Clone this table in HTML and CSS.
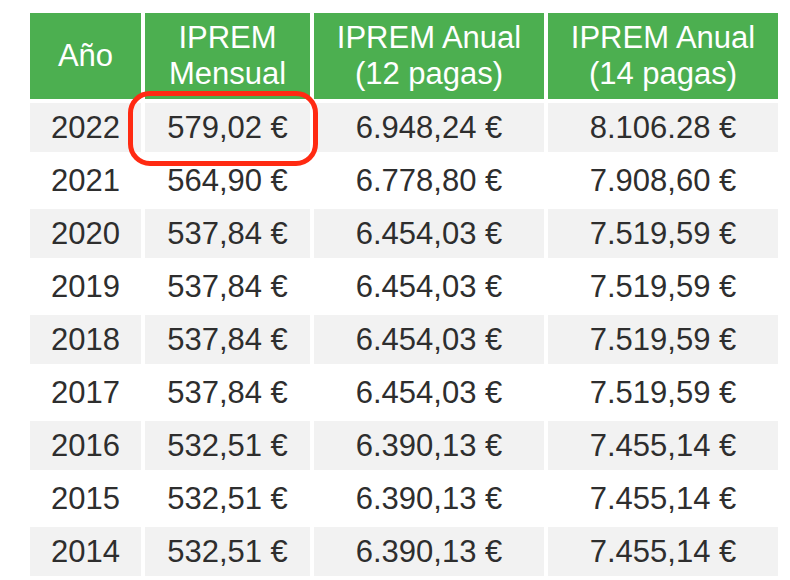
FILE: index.html
```html
<!DOCTYPE html>
<html lang="es">
<head>
<meta charset="utf-8">
<link rel="stylesheet" href="styles.css">
</head>
<body>
<div class="wrap">
<table class="iprem">
<thead>
<tr><th class="c1">Año</th><th class="c2">IPREM<br>Mensual</th><th class="c3">IPREM Anual<br>(12 pagas)</th><th class="c4">IPREM Anual<br>(14 pagas)</th></tr>
</thead>
<tbody>
<tr><td>2022</td><td>579,02 €</td><td>6.948,24 €</td><td>8.106.28 €</td></tr>
<tr><td>2021</td><td>564,90 €</td><td>6.778,80 €</td><td>7.908,60 €</td></tr>
<tr><td>2020</td><td>537,84 €</td><td>6.454,03 €</td><td>7.519,59 €</td></tr>
<tr><td>2019</td><td>537,84 €</td><td>6.454,03 €</td><td>7.519,59 €</td></tr>
<tr><td>2018</td><td>537,84 €</td><td>6.454,03 €</td><td>7.519,59 €</td></tr>
<tr><td>2017</td><td>537,84 €</td><td>6.454,03 €</td><td>7.519,59 €</td></tr>
<tr><td>2016</td><td>532,51 €</td><td>6.390,13 €</td><td>7.455,14 €</td></tr>
<tr><td>2015</td><td>532,51 €</td><td>6.390,13 €</td><td>7.455,14 €</td></tr>
<tr><td>2014</td><td>532,51 €</td><td>6.390,13 €</td><td>7.455,14 €</td></tr>
</tbody>
</table>
<div class="highlight"></div>
</div>
</body>
</html>
```
FILE: styles.css
```css
html, body {
  margin: 0;
  padding: 0;
  background: #ffffff;
}
.wrap {
  position: relative;
  padding: 9px 0 0 26px;
}
.iprem {
  border-collapse: separate;
  border-spacing: 4px;
  font-family: "Liberation Sans", Arial, sans-serif;
  font-size: 31px;
  color: #2e2e2e;
}
.iprem th {
  background: #4caf50;
  color: #ffffff;
  font-weight: normal;
  height: 86px;
  padding: 0;
  line-height: 36px;
  text-align: center;
  vertical-align: middle;
}
.iprem td {
  height: 49px;
  padding: 0;
  line-height: 49px;
  text-align: center;
  vertical-align: middle;
}
.iprem tbody tr:nth-child(odd) td {
  background: #f2f2f2;
}
.c1 { width: 111px; }
.c2 { width: 165px; }
.c3 { width: 230px; }
.c4 { width: 230px; }
.highlight {
  position: absolute;
  left: 128px;
  top: 91px;
  width: 180px;
  height: 65px;
  border: 5px solid #ff2a12;
  border-radius: 22px;
}
```
